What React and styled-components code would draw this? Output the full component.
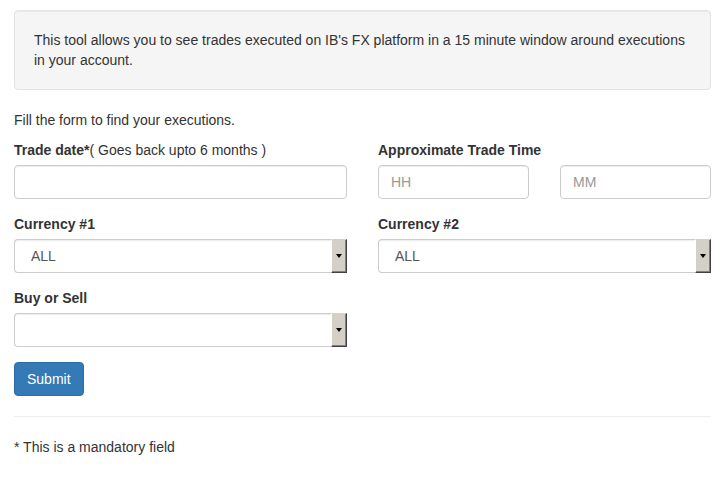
import React from "react";
import styled, { createGlobalStyle } from "styled-components";

const GlobalStyle = createGlobalStyle`
  * { box-sizing: border-box; }
  body {
    margin: 0;
    background: #fff;
    color: #333;
    font-family: "Liberation Sans", Arial, sans-serif;
    font-size: 14px;
    line-height: 20px;
  }
`;

const Page = styled.div`
  padding: 10px 6px 20px 14px;
`;

const Well = styled.div`
  background: #f5f5f5;
  border: 1px solid #e3e3e3;
  border-radius: 4px;
  padding: 19px 19px 19px 19px;
  margin-bottom: 20px;
  box-shadow: inset 0 1px 1px rgba(0, 0, 0, 0.05);
`;

const Text = styled.p`
  margin: 0 0 10px;
`;

const Grid = styled.div`
  display: grid;
  grid-template-columns: 1fr 1fr;
  column-gap: 31px;
`;

const Group = styled.div`
  margin-bottom: 15px;
`;

const Label = styled.label`
  display: block;
  font-weight: bold;
  margin-bottom: 5px;
`;

const Note = styled.span`
  font-weight: normal;
`;

const Pair = styled.div`
  display: grid;
  grid-template-columns: 1fr 1fr;
  column-gap: 31px;
`;

const Input = styled.input`
  display: block;
  width: 100%;
  height: 34px;
  padding: 6px 12px;
  font: inherit;
  color: #555;
  background: #fff;
  border: 1px solid #ccc;
  border-radius: 4px;
  box-shadow: inset 0 1px 1px rgba(0, 0, 0, 0.075);
  outline: none;
  &::placeholder {
    color: #999;
  }
`;

const SelectBox = styled.div`
  display: flex;
  height: 34px;
  border: 1px solid #ccc;
  border-right: none;
  border-radius: 4px 0 0 4px;
  background: #fff;
  box-shadow: inset 0 1px 1px rgba(0, 0, 0, 0.075);
`;

const Select = styled.select`
  flex: 1;
  min-width: 0;
  appearance: none;
  border: none;
  background: transparent;
  font: inherit;
  color: #555;
  padding: 0 12px 0 16px;
  outline: none;
`;

const ArrowButton = styled.span`
  width: 16px;
  margin: -1px 0;
  display: flex;
  align-items: center;
  justify-content: center;
  background: #d4d0c8;
  border-top: 1px solid #d4d0c8;
  border-left: 1px solid #fff;
  border-right: 1px solid #404040;
  border-bottom: 1px solid #404040;
  box-shadow: inset -1px -1px 0 #808080;
`;

const Caret = styled.span`
  width: 0;
  height: 0;
  border-left: 3.5px solid transparent;
  border-right: 3.5px solid transparent;
  border-top: 4px solid #000;
  margin-right: 1px;
`;

const Submit = styled.button`
  display: inline-block;
  height: 34px;
  padding: 6px 12px;
  font: inherit;
  color: #fff;
  background: #337ab7;
  border: 1px solid #2e6da4;
  border-radius: 4px;
  cursor: pointer;
  margin-top: 0;
`;

const Rule = styled.hr`
  margin: 20px 0;
  border: 0;
  border-top: 1px solid #eee;
`;

const Dropdown = ({ children }) => (
  <SelectBox>
    <Select defaultValue={children ? "ALL" : ""}>
      {children ? <option value="ALL">ALL</option> : <option value="" />}
    </Select>
    <ArrowButton>
      <Caret />
    </ArrowButton>
  </SelectBox>
);

export default function App() {
  return (
    <>
      <GlobalStyle />
      <Page>
        <Well>
          This tool allows you to see trades executed on IB's FX platform in a 15 minute
          window around executions in your account.
        </Well>
        <Text>Fill the form to find your executions.</Text>
        <Grid>
          <Group>
            <Label>
              Trade date*<Note>( Goes back upto 6 months )</Note>
            </Label>
            <Input type="text" />
          </Group>
          <Group>
            <Label>Approximate Trade Time</Label>
            <Pair>
              <Input type="text" placeholder="HH" />
              <Input type="text" placeholder="MM" />
            </Pair>
          </Group>
          <Group>
            <Label>Currency #1</Label>
            <Dropdown>ALL</Dropdown>
          </Group>
          <Group>
            <Label>Currency #2</Label>
            <Dropdown>ALL</Dropdown>
          </Group>
          <Group>
            <Label>Buy or Sell</Label>
            <Dropdown />
          </Group>
        </Grid>
        <Submit type="button">Submit</Submit>
        <Rule />
        <Text>* This is a mandatory field</Text>
      </Page>
    </>
  );
}
